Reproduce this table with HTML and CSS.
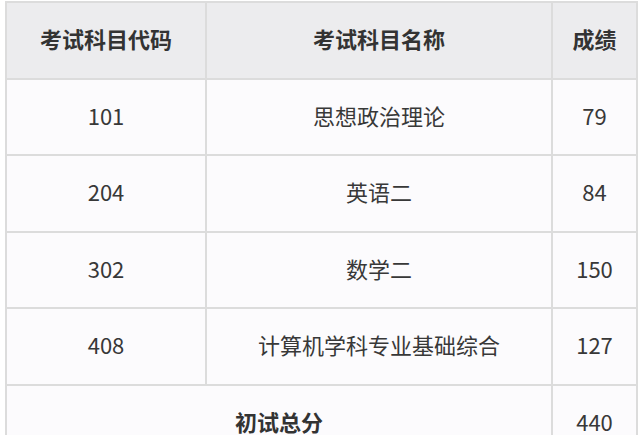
FILE: index.html
```html
<!DOCTYPE html>
<html lang="zh">
<head>
<meta charset="utf-8">
<link rel="stylesheet" href="styles.css">
</head>
<body>
<table class="score-table">
  <colgroup>
    <col class="col-code">
    <col class="col-name">
    <col class="col-score">
  </colgroup>
  <thead>
    <tr>
      <th>考试科目代码</th>
      <th>考试科目名称</th>
      <th>成绩</th>
    </tr>
  </thead>
  <tbody>
    <tr><td>101</td><td>思想政治理论</td><td>79</td></tr>
    <tr><td>204</td><td>英语二</td><td>84</td></tr>
    <tr><td>302</td><td>数学二</td><td>150</td></tr>
    <tr><td>408</td><td>计算机学科专业基础综合</td><td>127</td></tr>
    <tr class="total"><td colspan="2" class="total-label">初试总分</td><td>440</td></tr>
  </tbody>
</table>
</body>
</html>
```
FILE: styles.css
```css
html, body {
  margin: 0;
  padding: 0;
  background: #ffffff;
}
body {
  padding: 1px 0 0 5px;
  font-family: "Noto Sans CJK SC", "Noto Sans", sans-serif;
  color: #333333;
}
.score-table {
  border-collapse: collapse;
  width: 631px;
  table-layout: fixed;
  border: 2px solid #dcdcdc;
}
.col-code { width: 200px; }
.col-name { width: 346px; }
.col-score { width: 85px; }
.score-table th,
.score-table td {
  border: 2px solid #dcdcdc;
  text-align: center;
  vertical-align: middle;
  font-size: 22px;
  line-height: 28px;
  padding: 0 0 4px 0;
  height: 70.5px;
}
.score-table th {
  background: #ececee;
  font-weight: bold;
  color: #333333;
}
.score-table td {
  background: #fcfbfd;
  font-weight: normal;
  color: #383838;
}
.score-table td.total-label {
  font-weight: bold;
  color: #333333;
}
```
